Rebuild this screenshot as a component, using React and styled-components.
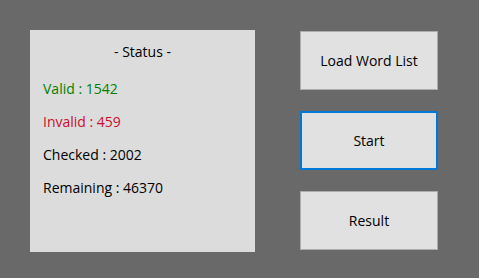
import React from "react";
import styled, { createGlobalStyle } from "styled-components";

const Global = createGlobalStyle`
  html, body { margin: 0; padding: 0; background: #696969; }
  body { font-family: "Open Sans", "Noto Sans", sans-serif; }
`;

const Page = styled.div`
  width: 479px;
  height: 278px;
  background: #696969;
  display: flex;
  align-items: flex-start;
  padding: 30px 0 0 30px;
  box-sizing: border-box;
  gap: 45px;
`;

const Panel = styled.div`
  width: 225px;
  height: 222px;
  background: #dcdcdc;
  box-sizing: border-box;
  padding: 12px 0 0 13px;
  display: flex;
  flex-direction: column;
`;

const Title = styled.div`
  font-size: 14px;
  color: #000;
  text-align: center;
  padding-right: 13px;
  line-height: 20px;
  margin-bottom: 17px;
`;

const Stat = styled.div`
  font-size: 14px;
  line-height: 20px;
  margin-bottom: 13px;
  color: ${(p) => p.$color || "#000"};
`;

const Buttons = styled.div`
  display: flex;
  flex-direction: column;
  gap: 21px;
  margin-top: 1px;
`;

const Button = styled.button`
  width: 138px;
  height: 59px;
  box-sizing: border-box;
  background: #e1e1e1;
  border: ${(p) => (p.$focused ? "2px solid #0078d7" : "1px solid #adadad")};
  font-family: "Open Sans", "Noto Sans", sans-serif;
  font-size: 14px;
  color: #000;
  padding: 0;
  margin: 0;
  cursor: pointer;
  outline: none;
`;

export default function App() {
  return (
    <>
      <Global />
      <Page>
        <Panel>
          <Title>- Status -</Title>
          <Stat $color="#008000">Valid : 1542</Stat>
          <Stat $color="#c8102e">Invalid : 459</Stat>
          <Stat>Checked : 2002</Stat>
          <Stat>Remaining : 46370</Stat>
        </Panel>
        <Buttons>
          <Button>Load Word List</Button>
          <Button $focused>Start</Button>
          <Button>Result</Button>
        </Buttons>
      </Page>
    </>
  );
}
